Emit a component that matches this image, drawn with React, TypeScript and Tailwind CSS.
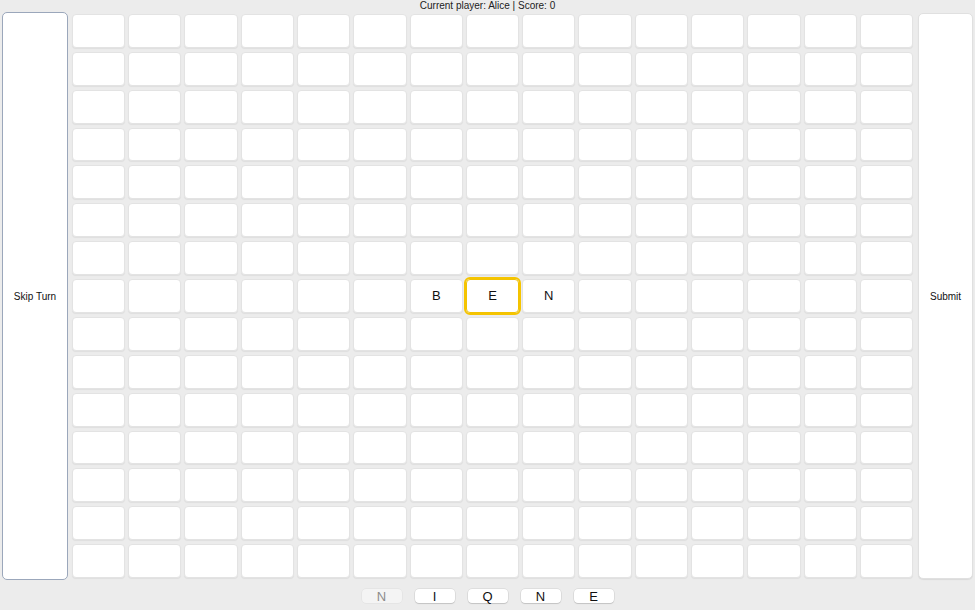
import React from 'react';

const SIZE = 15;

const placed: Record<string, string> = {
  '7-6': 'B',
  '7-7': 'E',
  '7-8': 'N',
};

const rack = [
  { letter: 'N', used: true },
  { letter: 'I', used: false },
  { letter: 'Q', used: false },
  { letter: 'N', used: false },
  { letter: 'E', used: false },
];

const Cell = ({ letter, selected }: { letter?: string; selected?: boolean }) => {
  return (
    <div
      className={`flex items-center justify-center rounded-[4px] border bg-white text-[13px] text-[#111] shadow-[0_1px_1px_rgba(0,0,0,0.06)] ${
        selected
          ? 'border-[#f2c200] outline-2 outline-offset-0 outline-[#f5c400]'
          : 'border-[#e3e3e3]'
      }`}
    >
      {letter}
    </div>
  );
};

const RackTile = ({ letter, used }: { letter: string; used: boolean }) => {
  return (
    <div
      className={`flex h-[14px] w-[40px] items-center justify-center rounded-[4px] text-[13px] leading-none ${
        used
          ? 'bg-[#f4f4f4] text-[#8c8c8c] shadow-[0_0_0_0.5px_rgba(0,0,0,0.06)]'
          : 'bg-white text-[#111] shadow-[0_0_0_0.5px_rgba(0,0,0,0.12),0_1px_1px_rgba(0,0,0,0.12)]'
      }`}
    >
      {letter}
    </div>
  );
};

const App = () => {
  const cells = [];
  for (let r = 0; r < SIZE; r++) {
    for (let c = 0; c < SIZE; c++) {
      const key = `${r}-${c}`;
      cells.push(<Cell key={key} letter={placed[key]} selected={key === '7-7'} />);
    }
  }

  return (
    <div
      className="flex h-[610px] w-[975px] flex-col overflow-hidden bg-[#ececec]"
      style={{ fontFamily: '"Liberation Sans", Arial, sans-serif' }}
    >
      <div className="h-[12px] text-center text-[10px] leading-[12px] text-[#222]">
        Current player: Alice | Score: 0
      </div>

      <div className="flex h-[568px] pl-[2px] pr-[2px]">
        <button className="flex w-[66px] items-center justify-center rounded-[5px] border border-[#9ba7bb] bg-white text-[10px] text-[#111]">
          Skip Turn
        </button>

        <div className="ml-[4px] mr-[5px] my-[2px] grid w-[842px] grid-cols-[repeat(15,minmax(0,1fr))] grid-rows-[repeat(15,minmax(0,1fr))] gap-x-[3px] gap-y-[4px]">
          {cells}
        </div>

        <button className="my-[1px] flex w-[55px] items-center justify-center rounded-[5px] border border-[#e0e0e0] bg-white text-[10px] text-[#111] shadow-[0_1px_1px_rgba(0,0,0,0.08)]">
          Submit
        </button>
      </div>

      <div className="flex flex-1 items-start justify-center gap-[13px] pt-[9px] pl-[0px]">
        {rack.map((t, i) => (
          <RackTile key={i} letter={t.letter} used={t.used} />
        ))}
      </div>
    </div>
  );
};

export default App;
